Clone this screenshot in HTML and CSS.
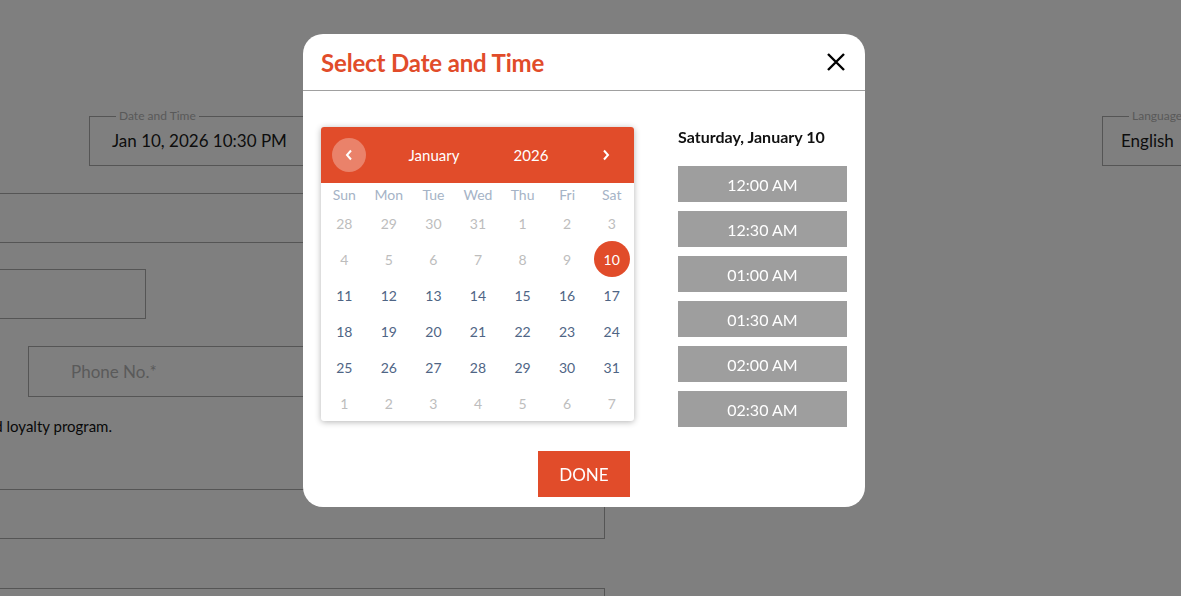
FILE: index.html
```html
<!DOCTYPE html>
<html>
<head>
<meta charset="utf-8">
<link rel="stylesheet" href="styles.css">
</head>
<body>
<div class="page">
  <div class="row-top">
    <fieldset class="fs fs-date"><legend>Date and Time</legend><span>Jan 10, 2026 10:30 PM</span></fieldset>
    <fieldset class="fs fs-lang"><legend>Language</legend><span>English</span></fieldset>
  </div>
  <div class="box box-a"></div>
  <div class="box box-b"></div>
  <div class="box box-c"><span class="ph">Phone No.*</span></div>
  <div class="note"><span>I would like to join the rewards and loyalty program.</span></div>
  <div class="box box-d"></div>
  <div class="box box-e"></div>
</div>

<div class="overlay">
  <div class="modal">
    <div class="modal-head">
      <h2 class="title">Select Date and Time</h2>
      <button class="close" aria-label="Close">
        <svg width="20" height="20" viewBox="0 0 20 20"><path d="M2 2 L18 18 M18 2 L2 18" stroke="#000" stroke-width="2.4" stroke-linecap="butt"/></svg>
      </button>
    </div>
    <div class="modal-body">
      <div class="cal">
        <div class="cal-head">
          <div class="nav-prev"><span class="circle"><svg width="10" height="12" viewBox="0 0 10 12"><path d="M7 1.5 L3 6 L7 10.5" fill="none" stroke="#fff" stroke-width="2"/></svg></span></div>
          <div class="month">January</div>
          <div class="year">2026</div>
          <div class="nav-next"><svg width="10" height="12" viewBox="0 0 10 12"><path d="M3 1.5 L7 6 L3 10.5" fill="none" stroke="#fff" stroke-width="2"/></svg></div>
        </div>
        <div class="grid wk">
          <span>Sun</span><span>Mon</span><span>Tue</span><span>Wed</span><span>Thu</span><span>Fri</span><span>Sat</span>
        </div>
        <div class="grid days">
          <span class="off">28</span><span class="off">29</span><span class="off">30</span><span class="off">31</span><span class="off">1</span><span class="off">2</span><span class="off">3</span>
          <span class="off">4</span><span class="off">5</span><span class="off">6</span><span class="off">7</span><span class="off">8</span><span class="off">9</span><span class="sel"><b>10</b></span>
          <span>11</span><span>12</span><span>13</span><span>14</span><span>15</span><span>16</span><span>17</span>
          <span>18</span><span>19</span><span>20</span><span>21</span><span>22</span><span>23</span><span>24</span>
          <span>25</span><span>26</span><span>27</span><span>28</span><span>29</span><span>30</span><span>31</span>
          <span class="off">1</span><span class="off">2</span><span class="off">3</span><span class="off">4</span><span class="off">5</span><span class="off">6</span><span class="off">7</span>
        </div>
      </div>
      <div class="times">
        <div class="day-title">Saturday, January 10</div>
        <div class="slot">12:00 AM</div>
        <div class="slot">12:30 AM</div>
        <div class="slot">01:00 AM</div>
        <div class="slot">01:30 AM</div>
        <div class="slot">02:00 AM</div>
        <div class="slot">02:30 AM</div>
      </div>
    </div>
    <div class="modal-foot"><button class="done">DONE</button></div>
  </div>
</div>
</body>
</html>
```

FILE: styles.css
```css
* { box-sizing: border-box; }
html, body { margin: 0; padding: 0; overflow: hidden; }
body {
  width: 1181px;
  height: 596px;
  background: #fff;
  font-family: "Lato", "Noto Sans", sans-serif;
  position: relative;
}
.page {
  display: flex;
  flex-direction: column;
  padding-top: 109px;
  height: 596px;
  overflow: hidden;
}
.row-top {
  display: flex;
  height: 57px;
  flex-shrink: 0;
}
.fs {
  margin: 0;
  padding: 0;
  border: 1px solid #aaa;
  height: 57px;
  display: flex;
  align-items: center;
  flex-shrink: 0;
}
.fs legend {
  font-size: 12px;
  color: #b3b3b3;
  padding: 0 3px;
  line-height: 14px;
}
.fs span {
  font-size: 17px;
  color: #1a1a1a;
  margin-top: -7px;
}
.fs-date {
  margin-left: 89px;
  width: 300px;
}
.fs-date legend { margin-left: 26px; }
.fs-date span { padding-left: 22px; }
.fs-lang {
  margin-left: 713px;
  width: 200px;
}
.fs-lang legend { margin-left: 26px; }
.fs-lang span { padding-left: 18px; }
.box {
  border: 1px solid #aaa;
  height: 50px;
  flex-shrink: 0;
}
.box-a { margin: 27px 0 0 -50px; width: 800px; }
.box-b { margin: 26px 0 0 -50px; width: 196px; }
.box-c {
  margin: 27px 0 0 28px; width: 700px; height: 51px;
  display: flex; align-items: center;
}
.ph { font-size: 17px; color: #b5b5b5; padding-left: 42px; }
.note {
  width: 112px;
  display: flex;
  justify-content: flex-end;
  margin-top: 20px;
  height: 20px;
  flex-shrink: 0;
}
.note span { white-space: nowrap; font-size: 15px; color: #111; }
.box-d { margin: 52px 0 0 -50px; width: 655px; }
.box-e { margin: 49px 0 0 -50px; width: 655px; }

.overlay {
  position: fixed;
  inset: 0;
  background: rgba(0, 0, 0, 0.5);
}
.modal {
  margin: 34px 0 0 303px;
  width: 562px;
  height: 473px;
  background: #fff;
  border-radius: 20px;
  display: flex;
  flex-direction: column;
}
.modal-head {
  height: 57px;
  border-bottom: 1px solid #a0a0a0;
  display: flex;
  align-items: center;
  justify-content: space-between;
  padding: 0 19px 0 18px;
}
.title {
  margin: 0;
  font-size: 24px;
  font-weight: 700;
  color: #e14c2a;
  letter-spacing: -0.15px;
}
.close {
  border: 0;
  background: none;
  padding: 0;
  width: 20px;
  height: 20px;
  margin-top: 0;
}
.close svg { display: block; }
.modal-body {
  display: flex;
  align-items: flex-start;
  gap: 44px;
  padding: 36px 0 0 18px;
}
.cal {
  width: 313px;
  background: #fff;
  box-shadow: 0 1px 6px rgba(0,0,0,0.3);
  border-radius: 3px;
  overflow: hidden;
}
.cal-head {
  height: 56px;
  background: #e14c2a;
  display: flex;
  align-items: center;
  color: #fff;
  font-size: 15px;
}
.nav-prev { width: 56px; display: flex; justify-content: center; }
.circle {
  width: 34px; height: 34px; border-radius: 50%;
  background: rgba(255,255,255,0.3);
  display: flex; align-items: center; justify-content: center;
}
.month { width: 114px; text-align: center; }
.year { width: 80px; text-align: center; }
.nav-next { flex: 1; display: flex; justify-content: center; padding-left: 6px; }
.grid {
  display: grid;
  grid-template-columns: repeat(7, 1fr);
  text-align: center;
}
.wk { height: 22px; align-items: center; font-size: 14px; color: #a5b3c6; padding-left: 1px; }
.days { padding-left: 1px; }
.days span {
  height: 36px;
  display: flex; align-items: center; justify-content: center;
  font-size: 14px; color: #4f6585;
}
.days span.off { color: #bdbdbd; }
.days span.sel b {
  width: 36px; height: 36px; border-radius: 50%;
  background: #e14c2a; color: #fff; font-weight: 400;
  display: flex; align-items: center; justify-content: center;
}
.times { width: 169px; display: flex; flex-direction: column; }
.day-title {
  font-size: 16px; font-weight: 700; color: #111;
  line-height: 20px;
  margin-bottom: 19px;
}
.slot {
  height: 36px;
  background: #9e9e9e;
  color: #fff;
  font-size: 16px;
  display: flex; align-items: center; justify-content: center;
  margin-bottom: 9px;
}
.modal-foot {
  display: flex;
  justify-content: center;
  padding-top: 15px;
}
.done {
  width: 92px; height: 46px;
  background: #e14c2a; color: #fff; border: 0;
  font-family: inherit; font-size: 17px;
}
```
